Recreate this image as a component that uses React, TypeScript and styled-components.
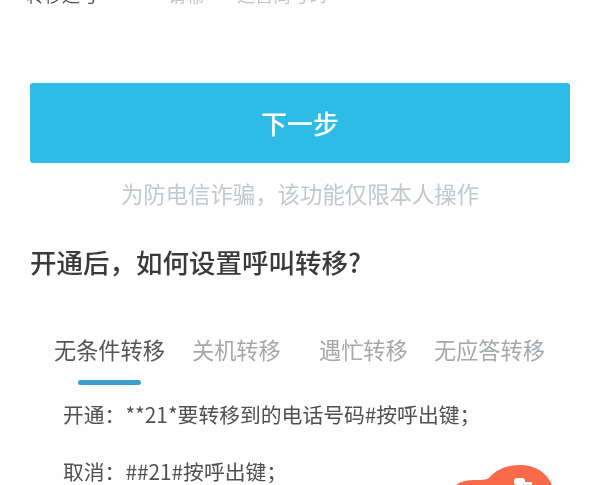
import React, { useState } from 'react';
import styled, { createGlobalStyle } from 'styled-components';

const TABS = [
  { label: '无条件转移', width: 138 },
  { label: '关机转移', width: 127 },
  { label: '遇忙转移', width: 115 },
  { label: '无应答转移', width: 112 },
];

const App: React.FC = () => {
  const [active] = useState(0);

  return (
    <Page>
      <GlobalStyle />
      <TopRow>
        <TopLabel>转移运号</TopLabel>
        <TopHint>请输</TopHint>
        <TopHint>运营商号码</TopHint>
      </TopRow>
      <NextButton>下一步</NextButton>
      <Notice>为防电信诈骗，该功能仅限本人操作</Notice>
      <Heading>开通后，如何设置呼叫转移?</Heading>
      <TabBar>
        {TABS.map((tab, idx) => (
          <Tab key={tab.label} active={idx === active} $width={tab.width}>
            {tab.label}
          </Tab>
        ))}
      </TabBar>
      <Indicator />
      <Steps>
        <Step>开通：**21*要转移到的电话号码#按呼出键；</Step>
        <Step>取消：##21#按呼出键；</Step>
      </Steps>
      <Cloud viewBox="0 0 110 20" aria-hidden="true">
        <path
          d="M4 20 C9 16 16 15 24 15 C29 15 34 15 37 13 C44 5 54 0 68 0 C84 0 95 8 100 20 Z"
          fill="#f96a4a"
        />
        <rect x="62" y="13" width="11" height="7" rx="3" fill="#ffffff" />
        <rect x="72" y="17" width="8" height="3" fill="#ffffff" />
      </Cloud>
    </Page>
  );
};

export default App;

const GlobalStyle = createGlobalStyle`
  html, body {
    margin: 0;
    padding: 0;
    background: #fefefe;
  }
`;

const Page = styled.div`
  position: relative;
  width: 600px;
  height: 485px;
  overflow: hidden;
  background: #fefefe;
  font-family: "Noto Sans CJK SC", "Liberation Sans", sans-serif;
  filter: blur(0.4px);
`;

const TopRow = styled.div`
  display: flex;
  align-items: center;
  height: 26px;
  margin-top: -19px;
  padding-left: 26px;
  font-size: 18px;
`;

const TopLabel = styled.span`
  width: 142px;
  color: #555;
`;

const TopHint = styled.span`
  margin-right: 33px;
  color: #c4c4c4;
`;

const NextButton = styled.div`
  display: flex;
  align-items: center;
  justify-content: center;
  height: 80px;
  margin: 76px 30px 0;
  padding-bottom: 2px;
  box-sizing: border-box;
  border-radius: 3px;
  background: #2dbce6;
  color: #fff;
  font-size: 26px;
  font-weight: 500;
`;

const Notice = styled.div`
  margin-top: 14px;
  line-height: 32px;
  text-align: center;
  font-size: 22.4px;
  color: #c3c8cc;
`;

const Heading = styled.div`
  margin: 35px 0 0 30px;
  line-height: 36px;
  font-size: 26.5px;
  font-weight: 500;
  color: #3a3a3a;
`;

const TabBar = styled.div`
  display: flex;
  margin: 53px 0 0 54px;
`;

const Tab = styled.div<{ active: boolean; $width: number }>`
  width: ${props => props.$width}px;
  line-height: 32px;
  font-size: 22.2px;
  white-space: nowrap;
  color: ${props => (props.active ? '#555' : '#a5a8aa')};
`;

const Indicator = styled.div`
  width: 63px;
  height: 5px;
  margin: 15px 0 0 78px;
  border-radius: 3px;
  background: #3d9fd0;
`;

const Steps = styled.div`
  display: flex;
  flex-direction: column;
  gap: 27px;
  margin: 14px 0 0 63px;
`;

const Step = styled.div`
  line-height: 30px;
  font-size: 20.8px;
  color: #505050;
  white-space: nowrap;
`;

const Cloud = styled.svg`
  position: absolute;
  left: 452px;
  bottom: 0;
  width: 110px;
  height: 20px;
  display: block;
`;
